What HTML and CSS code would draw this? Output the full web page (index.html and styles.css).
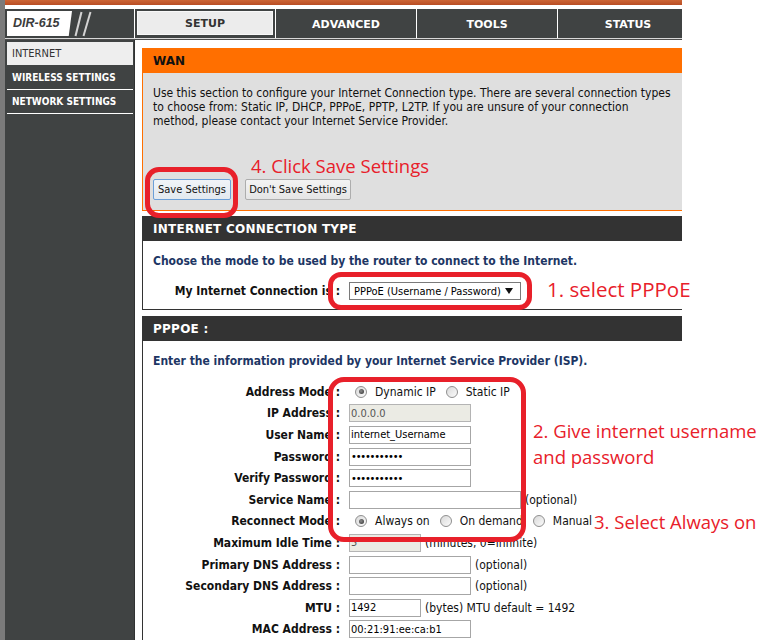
FILE: index.html
```html
<!DOCTYPE html>
<html>
<head>
<meta charset="utf-8">
<title>DIR-615 WAN</title>
<link rel="stylesheet" href="styles.css">
</head>
<body>
<div class="page">
  <div class="frame">
    <div class="topbar"></div>
    <div class="header">
      <div class="brand">
        <div class="logo">DIR-615</div>
        <svg class="slashes" width="22" height="27" viewBox="0 0 22 27"><line x1="2.5" y1="25" x2="8.5" y2="1" stroke="#d4d4d4" stroke-width="2"/><line x1="10.5" y1="25" x2="17.5" y2="1" stroke="#d4d4d4" stroke-width="2"/></svg>
      </div>
      <nav class="tabs">
        <div class="tab active"><span>SETUP</span></div>
        <div class="tab"><span>ADVANCED</span></div>
        <div class="tab"><span>TOOLS</span></div>
        <div class="tab"><span>STATUS</span></div>
      </nav>
    </div>
    <div class="rule"></div>
    <div class="main">
      <aside class="sidebar">
        <div class="side-item active">INTERNET</div>
        <div class="side-item">WIRELESS SETTINGS</div>
        <div class="side-item">NETWORK SETTINGS</div>
      </aside>
      <section class="content">
        <div class="box wan">
          <div class="box-head">WAN</div>
          <div class="wan-body">
            <p>Use this section to configure your Internet Connection type. There are several connection types<br>to choose from: Static IP, DHCP, PPPoE, PPTP, L2TP. If you are unsure of your connection<br>method, please contact your Internet Service Provider.</p>
            <div class="buttons">
              <button class="btn btn-save" type="button">Save Settings</button>
              <button class="btn btn-dont" type="button">Don't Save Settings</button>
            </div>
          </div>
        </div>

        <div class="box dark ict">
          <div class="box-head">INTERNET CONNECTION TYPE</div>
          <div class="box-body">
            <p class="lead">Choose the mode to be used by the router to connect to the Internet.</p>
            <div class="row conn-row">
              <span class="lbl">My Internet Connection is :</span>
              <div class="fld">
                <div class="select"><span>PPPoE (Username / Password)</span><svg width="8" height="6" viewBox="0 0 8 6"><polygon points="0,0 8,0 4,6" fill="#111"/></svg></div>
              </div>
            </div>
          </div>
        </div>

        <div class="box dark pppoe">
          <div class="box-head">PPPOE :</div>
          <div class="box-body">
            <p class="lead">Enter the information provided by your Internet Service Provider (ISP).</p>
            <div class="form">
              <div class="row"><span class="lbl">Address Mode :</span><div class="fld radios"><span class="opt"><span class="radio on"></span>Dynamic IP</span><span class="opt"><span class="radio"></span>Static IP</span></div></div>
              <div class="row"><span class="lbl">IP Address :</span><div class="fld"><input class="in w122" type="text" value="0.0.0.0" disabled></div></div>
              <div class="row"><span class="lbl">User Name :</span><div class="fld"><input class="in w122" type="text" value="internet_Username"></div></div>
              <div class="row"><span class="lbl">Password :</span><div class="fld"><input class="in w122 pw" type="password" value="abcdefghijk"></div></div>
              <div class="row"><span class="lbl">Verify Password :</span><div class="fld"><input class="in w122 pw" type="password" value="abcdefghijk"></div></div>
              <div class="row"><span class="lbl">Service Name :</span><div class="fld"><input class="in w172" type="text" value=""><span class="hint">(optional)</span></div></div>
              <div class="row"><span class="lbl">Reconnect Mode :</span><div class="fld radios"><span class="opt"><span class="radio on"></span>Always on</span><span class="opt"><span class="radio"></span>On demand</span><span class="opt"><span class="radio"></span>Manual</span></div></div>
              <div class="row"><span class="lbl">Maximum Idle Time :</span><div class="fld"><input class="in w72" type="text" value="5" disabled><span class="hint">(minutes, 0=infinite)</span></div></div>
              <div class="row"><span class="lbl">Primary DNS Address :</span><div class="fld"><input class="in w122" type="text" value=""><span class="hint">(optional)</span></div></div>
              <div class="row"><span class="lbl">Secondary DNS Address :</span><div class="fld"><input class="in w122" type="text" value=""><span class="hint">(optional)</span></div></div>
              <div class="row"><span class="lbl">MTU :</span><div class="fld"><input class="in w72" type="text" value="1492"><span class="hint">(bytes) MTU default = 1492</span></div></div>
              <div class="row"><span class="lbl">MAC Address :</span><div class="fld"><input class="in w122" type="text" value="00:21:91:ee:ca:b1"></div></div>
            </div>
          </div>
        </div>
      </section>
    </div>
  </div>

  <div class="redbox rb-save"></div>
  <div class="redbox rb-select"></div>
  <div class="redbox rb-form"></div>
  <div class="note n4">4. Click Save Settings</div>
  <div class="note n1">1. select PPPoE</div>
  <div class="note n2">2. Give internet username<br>and password</div>
  <div class="note n3">3. Select Always on</div>
</div>
</body>
</html>
```

FILE: styles.css
```css
* { box-sizing: border-box; }
html, body { margin: 0; padding: 0; background: #fff; }
body {
  font-family: "DejaVu Sans Condensed", "DejaVu Sans", sans-serif;
  font-stretch: condensed;
  font-size: 12px;
  color: #111;
}
.page { position: relative; width: 767px; height: 640px; overflow: hidden; background: #fff; }
.frame {
  width: 682px; height: 640px;
  border-left: 5px solid #7b7b7b;
  display: flex; flex-direction: column;
  overflow: hidden;
}
.topbar { flex: none; height: 5px; background: linear-gradient(#cc6535, #b94d24); }
.header { flex: none; margin-top: 4px; height: 29px; background: #404343; display: flex; }
.brand { flex: none; width: 129px; display: flex; align-items: flex-start; padding: 2px 0 0 2px; }
.logo {
  width: 65px; height: 25px; background: #fff;
  clip-path: polygon(0 0, 100% 0, 95% 100%, 0 100%);
  font: italic bold 12.5px "Liberation Sans", Arial, sans-serif;
  font-stretch: normal;
  color: #3c3c3c; line-height: 25px; padding-left: 6px;
}
.slashes { display: block; margin-left: 1px; }
.tabs { flex: 1; display: flex; overflow: hidden; }
.tab {
  flex: none; width: 141px; border-left: 1px solid #fff;
  display: flex; align-items: center; justify-content: center;
  font-family: "DejaVu Sans", sans-serif; font-stretch: normal;
  font-weight: bold; font-size: 11px; color: #fff; padding-top: 1px;
}
.tab.active { padding: 2px 2px 3px 2px; }
.tab.active span {
  width: 100%; height: 100%; display: flex; align-items: center; justify-content: center;
  background: #ececec; border: 1px solid #f8f8f8; color: #333; padding-top: 1px;
}
.rule { flex: none; height: 2px; background: linear-gradient(#d9d9d9 50%, #4e4e4e 50%); }
.main { flex: 1; display: flex; min-height: 0; }
.sidebar { flex: none; width: 130px; background: #404343; border-right: 1px solid #303232; }
.side-item {
  height: 24px; line-height: 24px; margin: 0 1px 0 2px; padding-left: 5px;
  border-bottom: 1px solid #fff;
  color: #fff; font-weight: bold; font-size: 10px; white-space: nowrap;
}
.side-item.active {
  margin-top: 2px; background: #eeeeee; color: #333; font-weight: normal; font-size: 11px;
  border-bottom-color: #404343;
}
.content { flex: 1; padding: 8px 0 0 7px; overflow: hidden; }
.box { border-left: 1px solid #333; border-bottom: 1px solid #333; }
.box-head {
  height: 25px; line-height: 26px; padding-left: 10px;
  font-family: "DejaVu Sans", sans-serif; font-stretch: normal;
  font-weight: bold; font-size: 12px; white-space: nowrap;
}
.wan { border-color: #ff6f00; }
.wan .box-head { background: #ff6f00; color: #111; }
.wan-body { background: #dfdfdf; height: 137px; padding: 13px 10px 0 10px; }
p { margin: 0; line-height: 14px; white-space: nowrap; }
.buttons { margin-top: 51px; display: flex; gap: 14px; }
.btn {
  height: 21px; padding: 0; margin: 0;
  font-family: "DejaVu Sans Condensed", "DejaVu Sans", sans-serif; font-stretch: condensed;
  font-size: 11px; color: #111;
  border: 1px solid #adadad; border-radius: 2px;
  background: linear-gradient(#f3f3f3, #e5e5e5);
}
.btn-save { width: 78px; border-color: #6b9fd8; background: linear-gradient(#f0f4f8, #e3e9ef); }
.btn-dont { width: 106px; }
.dark .box-head { background: #333; color: #fff; letter-spacing: 0.25px; }
.ict { margin-top: 5px; }
.pppoe { margin-top: 6px; border-bottom: none; height: 400px; }
.box-body { background: #fff; padding-top: 13px; }
.ict .box-body { padding-bottom: 7px; }
.lead { padding-left: 10px; line-height: 15px; font-weight: bold; color: #1d3664; }
.row {
  display: grid; grid-template-columns: 197px 1fr; column-gap: 9px;
  align-items: center; height: 21.6px;
}
.conn-row { margin-top: 11px; height: 22px; }
.lbl { text-align: right; font-weight: bold; white-space: nowrap; color: #111; }
.fld { display: flex; align-items: center; white-space: nowrap; }
.form { margin-top: 12px; }
.select {
  width: 172px; height: 18px; border: 1px solid #7a7a7a; background: #fff;
  display: flex; align-items: center; justify-content: space-between;
  padding: 0 7px 0 4px; font-size: 11px; color: #000;
}
.in {
  -webkit-appearance: none; appearance: none;
  height: 18px; margin: 0; padding: 0 1px; border-radius: 0;
  border: 1px solid #a6a6a6; background: #fff; outline: none;
  font-family: "DejaVu Sans Condensed", "DejaVu Sans", sans-serif; font-stretch: condensed;
  font-size: 11px; color: #000;
}
.in:disabled { background: #ebebe4; color: #555; border-color: #b4b4b4; }
.w122 { width: 122px; }
.w172 { width: 172px; }
.w72 { width: 72px; }
.pw { letter-spacing: -1.2px; }
.hint { margin-left: 4px; color: #111; }
.radios { padding-left: 6px; }
.opt { display: flex; align-items: center; gap: 8px; margin-right: 10px; color: #111; }
.radio {
  width: 12px; height: 12px; border-radius: 50%;
  border: 1px solid #8f8f8f;
  background: linear-gradient(135deg, #d9d9d9, #fbfbfb);
  display: flex; align-items: center; justify-content: center;
}
.radio.on::after {
  content: ""; width: 5px; height: 5px; border-radius: 50%;
  background: radial-gradient(circle at 40% 40%, #8a8a8a, #2e2e2e);
}
.redbox { position: absolute; border: 5px solid #e8202a; border-radius: 14px; }
.rb-save { left: 145px; top: 167px; width: 93px; height: 51px; }
.rb-select { left: 328px; top: 272px; width: 204px; height: 38px; border-radius: 13px; }
.rb-form { left: 328px; top: 377px; width: 198px; height: 165px; border-radius: 16px; }
.note {
  position: absolute; white-space: nowrap;
  font-family: "Open Sans", "Noto Sans", sans-serif;
  font-stretch: normal;
  font-size: 18.5px; line-height: 26px; color: #e8202a;
}
.n4 { left: 251px; top: 153px; }
.n1 { left: 547px; top: 276px; font-size: 20.5px; }
.n2 { left: 533px; top: 418px; }
.n3 { left: 594px; top: 509px; }
```
